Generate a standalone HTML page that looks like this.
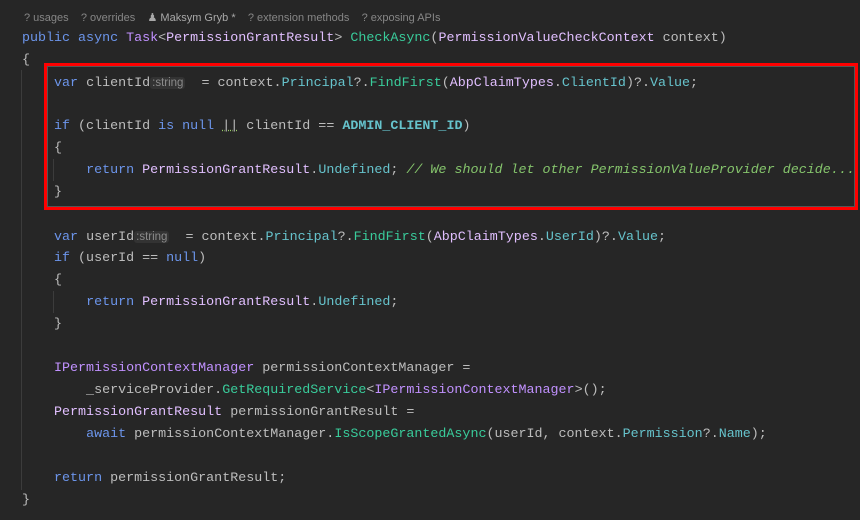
<!DOCTYPE html>
<html><head><meta charset="utf-8"><style>
body{margin:0;background:#262626;width:860px;height:520px;overflow:hidden;position:relative;font-family:"Liberation Mono",monospace;}
.l{position:absolute;left:22px;height:22px;line-height:22px;font-size:13.35px;color:#bdbdbd;white-space:pre;}
.k{color:#6c95eb}.t{color:#c191ff}.r{color:#e1bfff}.m{color:#39cc9b}.p{color:#66c3cc}.c{color:#85c46c;font-style:italic}
.b{font-weight:bold;color:#66c3cc}
.hint{font-family:"Liberation Sans",sans-serif;font-size:11.5px;color:#8a8a8a;background:#333;border-radius:3px;padding:0 2px;}
.hints{position:absolute;left:24px;top:11px;font-family:"Liberation Sans",sans-serif;font-size:11px;color:#868686;white-space:pre;}
.g{position:absolute;width:1px;background:#3c3c3c}
.box{position:absolute;left:44px;top:63px;width:808px;height:141px;border:3px solid #f00;box-shadow:inset 0 0 0 1px #555;}
</style></head><body>
<div class="hints">? usages    ? overrides    <span style="color:#a8a8a8">&#9823; Maksym Gryb *</span>    ? extension methods    ? exposing APIs</div>
<div class="g" style="left:21px;top:70px;height:420px"></div>
<div class="g" style="left:53px;top:159px;height:22px"></div>
<div class="g" style="left:53px;top:291px;height:22px"></div>
<div class="box"></div>
<div class="l" style="top:28px"><span class="k">public async</span> <span class="t">Task</span>&lt;<span class="r">PermissionGrantResult</span>&gt; <span class="m">CheckAsync</span>(<span class="r">PermissionValueCheckContext</span> context)</div>
<div class="l" style="top:50px">{</div>
<div class="l" style="top:72px">    <span class="k">var</span> clientId<span class="hint">:string</span>  = context.<span class="p">Principal</span>?.<span class="m">FindFirst</span>(<span class="r">AbpClaimTypes</span>.<span class="p">ClientId</span>)?.<span class="p">Value</span>;</div>
<div class="l" style="top:116px">    <span class="k">if</span> (clientId <span class="k">is null</span> <span style="text-decoration:underline dotted #9c6">||</span> clientId == <span class="b">ADMIN_CLIENT_ID</span>)</div>
<div class="l" style="top:138px">    {</div>
<div class="l" style="top:160px">        <span class="k">return</span> <span class="r">PermissionGrantResult</span>.<span class="p">Undefined</span>; <span class="c">// We should let other PermissionValueProvider decide...</span></div>
<div class="l" style="top:182px">    }</div>
<div class="l" style="top:226px">    <span class="k">var</span> userId<span class="hint">:string</span>  = context.<span class="p">Principal</span>?.<span class="m">FindFirst</span>(<span class="r">AbpClaimTypes</span>.<span class="p">UserId</span>)?.<span class="p">Value</span>;</div>
<div class="l" style="top:248px">    <span class="k">if</span> (userId == <span class="k">null</span>)</div>
<div class="l" style="top:270px">    {</div>
<div class="l" style="top:292px">        <span class="k">return</span> <span class="r">PermissionGrantResult</span>.<span class="p">Undefined</span>;</div>
<div class="l" style="top:314px">    }</div>
<div class="l" style="top:358px">    <span class="t">IPermissionContextManager</span> permissionContextManager =</div>
<div class="l" style="top:380px">        _serviceProvider.<span class="m">GetRequiredService</span>&lt;<span class="t">IPermissionContextManager</span>&gt;();</div>
<div class="l" style="top:402px">    <span class="r">PermissionGrantResult</span> permissionGrantResult =</div>
<div class="l" style="top:424px">        <span class="k">await</span> permissionContextManager.<span class="m">IsScopeGrantedAsync</span>(userId, context.<span class="p">Permission</span>?.<span class="p">Name</span>);</div>
<div class="l" style="top:468px">    <span class="k">return</span> permissionGrantResult;</div>
<div class="l" style="top:490px">}</div>
</body></html>
